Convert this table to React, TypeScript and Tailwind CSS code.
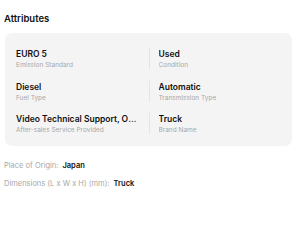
const attributes = [
  { value: 'EURO 5', label: 'Emission Standard' },
  { value: 'Used', label: 'Condition' },
  { value: 'Diesel', label: 'Fuel Type' },
  { value: 'Automatic', label: 'Transmission Type' },
  { value: 'Video Technical Support, Online Support', label: 'After-sales Service Provided' },
  { value: 'Truck', label: 'Brand Name' },
];

const details = [
  { label: 'Place of Origin:', value: 'Japan' },
  { label: 'Dimensions (L x W x H) (mm):', value: 'Truck' },
];

export default function App() {
  return (
    <div className="min-h-screen bg-white pl-[4px] pr-[8px] pt-[12px] font-['Inter',sans-serif] text-[#111]">
      <h2 className="text-[9.5px] leading-[13px] font-semibold">Attributes</h2>

      {/* 속성 카드 */}
      <div className="mt-[8px] ml-px rounded-[7px] bg-[#f4f4f4] px-[11px] pt-[15px] pb-[12px] grid grid-cols-2 gap-y-[11.5px]">
        {attributes.map((item, i) => (
          <div key={i} className={`flex min-w-0 ${i % 2 === 1 ? '' : 'pr-[8px]'}`}>
            {i % 2 === 1 && <div className="w-px bg-[#e4e4e4] mr-[9px] shrink-0" />}
            <div className="min-w-0">
              <p className="text-[8.5px] leading-[12px] font-semibold truncate">{item.value}</p>
              <p className="mt-[1px] text-[6.5px] leading-[8px] text-[#a8a8a8] truncate">{item.label}</p>
            </div>
          </div>
        ))}
      </div>

      {/* 하단 상세 정보 */}
      <div className="mt-[15px] flex flex-col gap-[8px]">
        {details.map((d) => (
          <p key={d.label} className="text-[7.5px] leading-[10px]">
            <span className="text-[#a8a8a8]">{d.label}</span>
            <span className="ml-[4px] font-semibold">{d.value}</span>
          </p>
        ))}
      </div>
    </div>
  );
}
